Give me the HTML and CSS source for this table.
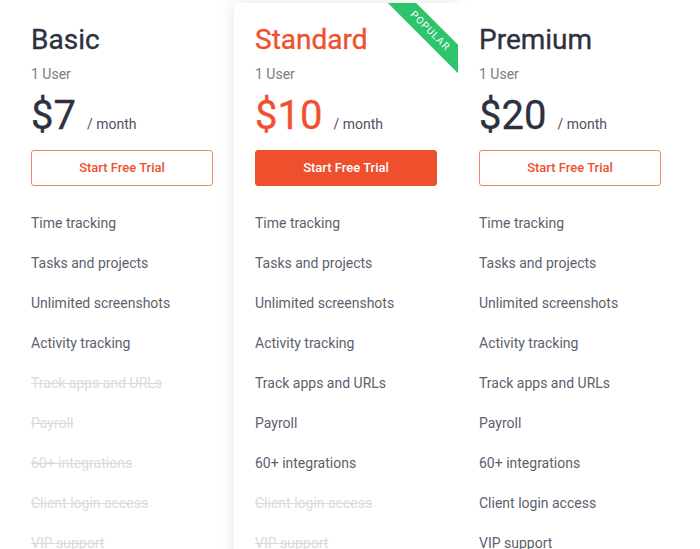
FILE: index.html
```html
<!DOCTYPE html>
<html lang="en">
<head>
<meta charset="utf-8">
<title>Pricing</title>
<link rel="stylesheet" href="styles.css">
</head>
<body>
<div class="plans">
  <div class="plan">
    <h2 class="plan-name">Basic</h2>
    <div class="users">1 User</div>
    <div class="price"><span class="amount">$7</span><span class="per">/ month</span></div>
    <a class="btn btn-outline">Start Free Trial</a>
    <ul class="features">
      <li>Time tracking</li>
      <li>Tasks and projects</li>
      <li>Unlimited screenshots</li>
      <li>Activity tracking</li>
      <li class="off">Track apps and URLs</li>
      <li class="off">Payroll</li>
      <li class="off">60+ integrations</li>
      <li class="off">Client login access</li>
      <li class="off">VIP support</li>
    </ul>
  </div>
  <div class="plan featured">
    <div class="ribbon">POPULAR</div>
    <h2 class="plan-name">Standard</h2>
    <div class="users">1 User</div>
    <div class="price"><span class="amount">$10</span><span class="per">/ month</span></div>
    <a class="btn btn-solid">Start Free Trial</a>
    <ul class="features">
      <li>Time tracking</li>
      <li>Tasks and projects</li>
      <li>Unlimited screenshots</li>
      <li>Activity tracking</li>
      <li>Track apps and URLs</li>
      <li>Payroll</li>
      <li>60+ integrations</li>
      <li class="off">Client login access</li>
      <li class="off">VIP support</li>
    </ul>
  </div>
  <div class="plan">
    <h2 class="plan-name">Premium</h2>
    <div class="users">1 User</div>
    <div class="price"><span class="amount">$20</span><span class="per">/ month</span></div>
    <a class="btn btn-outline">Start Free Trial</a>
    <ul class="features">
      <li>Time tracking</li>
      <li>Tasks and projects</li>
      <li>Unlimited screenshots</li>
      <li>Activity tracking</li>
      <li>Track apps and URLs</li>
      <li>Payroll</li>
      <li>60+ integrations</li>
      <li>Client login access</li>
      <li>VIP support</li>
    </ul>
  </div>
</div>
</body>
</html>
```
FILE: styles.css
```css
html, body {
  margin: 0;
  padding: 0;
  background: #ffffff;
  height: 549px;
  overflow: hidden;
}
body {
  font-family: Roboto, "Noto Sans", sans-serif;
  color: #2e3040;
}
.plans {
  display: flex;
  padding-left: 10px;
  padding-top: 3px;
  align-items: flex-start;
}
.plan {
  position: relative;
  overflow: hidden;
  width: 224px;
  box-sizing: border-box;
  padding: 20px 21px 40px 21px;
  border-radius: 4px;
  background: #fff;
}
.featured {
  box-shadow: 0 0 16px rgba(0, 0, 0, 0.1);
}
.plan-name {
  margin: 0;
  font-size: 28px;
  line-height: 34px;
  font-weight: 400;
  letter-spacing: 0;
  color: #2e3040;
  -webkit-text-stroke: 0.35px currentColor;
}
.featured .plan-name,
.featured .amount {
  color: #f0502e;
}
.users {
  margin-top: 7px;
  font-size: 14px;
  line-height: 20px;
  color: #787b87;
}
.price {
  margin-top: 8px;
  display: flex;
  align-items: baseline;
  height: 48px;
  line-height: 48px;
}
.amount {
  font-size: 40px;
  font-weight: 400;
  color: #2e3040;
  -webkit-text-stroke: 0.3px currentColor;
}
.per {
  margin-left: 11px;
  font-size: 14px;
  line-height: 20px;
  color: #4e5160;
}
.btn {
  display: block;
  margin-top: 10px;
  width: 182px;
  height: 36px;
  box-sizing: border-box;
  border-radius: 3px;
  font-size: 13px;
  font-weight: 500;
  line-height: 34px;
  text-align: center;
  cursor: pointer;
}
.btn-outline {
  border: 1px solid #f3876b;
  color: #f0502e;
}
.btn-solid {
  border: 1px solid #ee4f2c;
  background: #ee4f2c;
  color: #ffffff;
}
.features {
  list-style: none;
  margin: 17px 0 0 0;
  padding: 0;
}
.features li {
  font-size: 14px;
  line-height: 40px;
  color: #5c5f6e;
}
.features li.off {
  color: #d9dadf;
  text-decoration: line-through;
}
.ribbon {
  position: absolute;
  top: 18px;
  right: -22px;
  width: 100px;
  height: 20px;
  line-height: 20px;
  background: #2dc46c;
  color: #ffffff;
  font-size: 10px;
  letter-spacing: 1px;
  text-align: center;
  transform: rotate(45deg);
}
```
